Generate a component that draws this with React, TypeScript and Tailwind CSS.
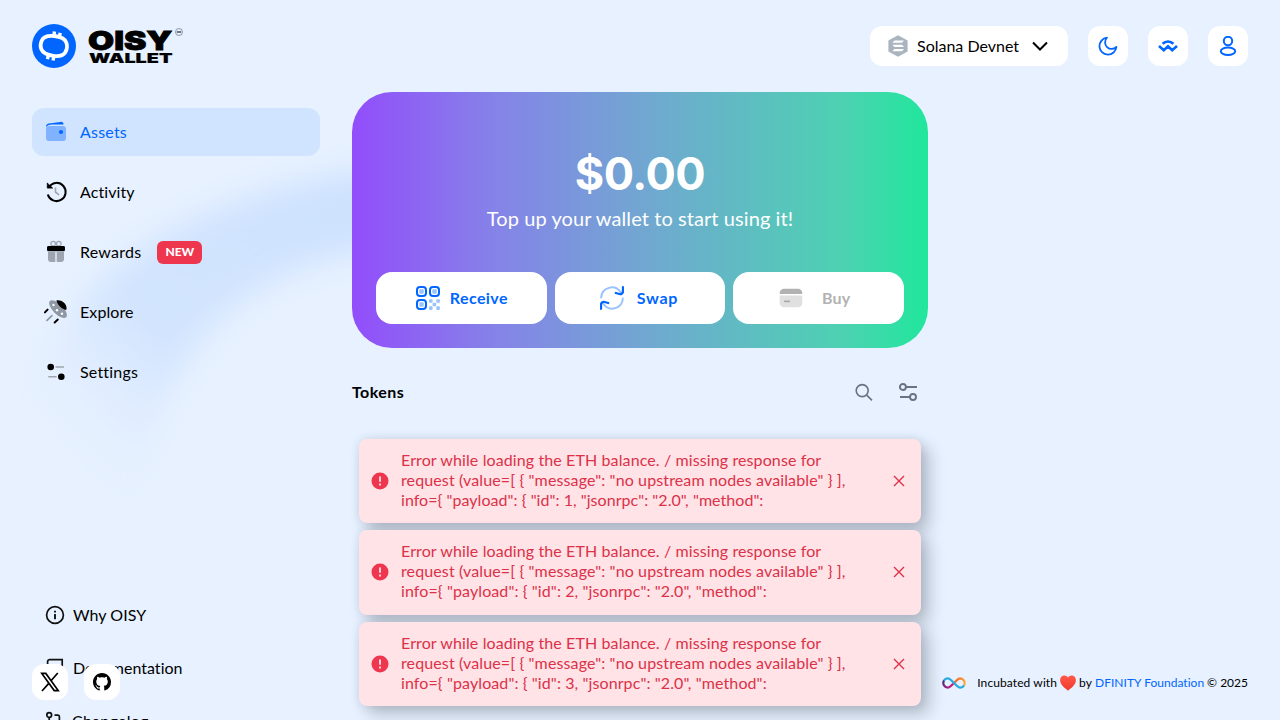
import React from "react";

function Logo() {
  return (
    <svg width="152" height="44" viewBox="0 0 152 44" fill="none">
      <circle cx="22" cy="22" r="22" fill="#0066ff" />
      <path
        d="M9.8 16.5C11.5 12.4 17 11.4 22.5 12C28.5 12.6 33.2 14.9 34.5 19C35.4 22 34.9 25.8 33.1 28.6C30.7 32.100 26.5 32.500 21.3 31.800C15.5 31 10.8 28.8 9.2 25C8.2 22.500 8.500 19.400 9.8 16.5Z"
        stroke="#fff"
        strokeWidth="3.8"
      />
      <path d="M21.700 12.5L22.500 7.600M27.300 13.3L28.200 8.800M16.400 30.8L15.500 35.200M22 31.500L21.100 36.500" stroke="#fff" strokeWidth="3.400" />
      <text x="56" y="26.3" textLength="84.5" lengthAdjust="spacingAndGlyphs" fill="#000" stroke="#000" strokeWidth="0.8" fontFamily="Inter, sans-serif" fontWeight="900" fontSize="26">
        OISY
      </text>
      <text x="57" y="39.4" textLength="83.500" lengthAdjust="spacingAndGlyphs" fill="#000" stroke="#000" strokeWidth="0.15" fontFamily="Inter, sans-serif" fontWeight="900" fontSize="13">
        WALLET
      </text>
      <circle cx="147" cy="8" r="3.5" stroke="#555c66" strokeWidth="0.6" />
      <path d="M144.8 8H149.2" stroke="#555c66" strokeWidth="1.6" />
    </svg>
  );
}

const WalletIcon = () => (
  <svg width="24" height="24" viewBox="0 0 24 24">
    <rect x="2" y="6" width="20" height="15" rx="3" fill="#80b2ff" />
    <path d="M2 7.2C2 4.6 3.2 3.8 5 3.5L16.5 1.9C18.5 1.7 19.4 2.6 19.6 4.4L8 4.6C5 4.8 3.2 5.4 2 7.2Z" fill="#0066ff" />
    <circle cx="17" cy="12" r="2.1" fill="#0066ff" />
  </svg>
);

const HistoryIcon = () => (
  <svg width="24" height="24" viewBox="0 0 24 24" fill="none" strokeWidth="2">
    <path d="M5.2 6.6A9.1 9.1 0 1 1 3.8 14.5" stroke="#000" />
    <path d="M3.3 2.9V8.1H8.6L6.6 6.2L5.2 5.2Z" fill="#000" stroke="#000" strokeWidth="0.8" />
    <path d="M11.5 7.5V12L15 14.8" stroke="#9ea5b0" strokeWidth="1.6" />
  </svg>
);

const GiftIcon = () => (
  <svg width="24" height="24" viewBox="0 0 24 24" fill="none">
    <circle cx="9.2" cy="3.7" r="2.3" stroke="#9ea5b0" strokeWidth="1.3" />
    <circle cx="14.8" cy="3.7" r="2.3" stroke="#9ea5b0" strokeWidth="1.3" />
    <path d="M4 12H11.3V22H7A3 3 0 0 1 4 19ZM12.7 12H20V19A3 3 0 0 1 17 22H12.7Z" fill="#9ea5b0" />
    <rect x="3" y="6" width="18" height="5.3" rx="1.4" fill="#000" />
  </svg>
);

const UfoIcon = () => (
  <svg width="24" height="24" viewBox="0 0 24 24" fill="none">
    <path d="M12.8 1.2C17.5-.2 22.8 4.2 21.5 10C18.5 9.5 13.2 5.6 12.8 1.2Z" fill="#000" />
    <ellipse cx="14" cy="9.1" rx="11.5" ry="5" transform="rotate(45 14 9.1)" fill="#8f98a4" />
    <path d="M12.4 .4C16.5 -1 24 3.500 22.300 9.800C18 9 13.800 5.500 12.400 .4Z" fill="#000" />
    <circle cx="9.5" cy="5" r="1.2" fill="#fff" />
    <circle cx="13" cy="10.3" r="1.2" fill="#fff" />
    <circle cx="18" cy="13.7" r="1.2" fill="#fff" />
    <path d="M3.6 9.6L.9 12.4M13.8 19.6L10.7 22.5" stroke="#000" strokeWidth="2" strokeLinecap="round" />
    <path d="M7.9 15.6L3 20.4" stroke="#8f98a4" strokeWidth="1.8" strokeLinecap="round" />
  </svg>
);

const SettingsIcon = () => (
  <svg width="24" height="24" viewBox="0 0 24 24" fill="none">
    <path d="M11.5 7H20M4.3 16.8H12.6" stroke="#9ea5b0" strokeWidth="1.5" />
    <circle cx="6.7" cy="7" r="3.3" fill="#000" />
    <circle cx="17.3" cy="16.8" r="3.3" fill="#000" />
  </svg>
);

const InfoIcon = () => (
  <svg width="20" height="20" viewBox="0 0 20 20" fill="none" stroke="#111" strokeWidth="1.7">
    <circle cx="10" cy="10" r="8.4" />
    <path d="M10 9V14.2M10 5.8V7.5" strokeWidth="1.9" />
  </svg>
);

const BookIcon = () => (
  <svg width="20" height="20" viewBox="0 0 20 20" fill="none" stroke="#111" strokeWidth="1.7">
    <path d="M2.6 17V3.4A2 2 0 0 1 4.6 1.6H17.2V15H4.6A2 2 0 0 0 4.6 19H17.2" />
  </svg>
);

const ChangelogIcon = () => (
  <svg width="20" height="20" viewBox="0 0 20 20" fill="none" stroke="#111" strokeWidth="1.7">
    <circle cx="4.2" cy="4" r="2.4" />
    <path d="M4.2 6.4V17M9.5 4.2H13A1.5 1.5 0 0 1 14.4 5.7V14" />
  </svg>
);

const SolanaIcon = () => (
  <svg width="20" height="22" viewBox="0 0 20 22">
    <path d="M10 .2L19.6 5.6V16.4L10 21.8L.4 16.4V5.6Z" fill="#a9b4bf" />
    <path d="M6.4 5.4H16L14 7.7H4.4ZM4.4 9.7H14L16 12H6.4ZM6.4 14H16L14 16.3H4.4Z" fill="#fff" />
  </svg>
);

const QrIcon = () => (
  <svg width="24" height="24" viewBox="0 0 24 24" fill="none">
    <g stroke="#0066ff" strokeWidth="2">
      <rect x="1" y="1" width="9" height="9" rx="3" />
      <rect x="14" y="1" width="9" height="9" rx="3" />
      <rect x="1" y="14" width="9" height="9" rx="3" />
    </g>
    <g fill="#99c2ff">
      <rect x="3.3" y="3.3" width="4.4" height="4.4" rx="1" />
      <rect x="16.3" y="3.3" width="4.4" height="4.4" rx="1" />
      <rect x="3.3" y="16.3" width="4.4" height="4.4" rx="1" />
      <rect x="13" y="13.2" width="3.6" height="3.6" rx=".8" />
      <rect x="20.3" y="13.2" width="3.6" height="3.6" rx=".8" />
      <rect x="16.6" y="16.7" width="3.6" height="3.6" rx=".8" />
      <rect x="13" y="20.3" width="3.6" height="3.6" rx=".8" />
      <rect x="20.3" y="20.3" width="3.6" height="3.6" rx=".8" />
    </g>
  </svg>
);

const SwapIcon = () => (
  <svg width="24" height="24" viewBox="0 0 24 24" fill="none" strokeWidth="2" strokeLinecap="round" strokeLinejoin="round">
    <path d="M1.2 11.5A10.6 10.6 0 0 1 20.5 6M22.8 12.5A10.6 10.6 0 0 1 3.5 18" stroke="#99c2ff" />
    <path d="M23 1.2V5.2A2.8 2.8 0 0 1 19.4 8L15.8 7M1 22.8V18.8A2.8 2.8 0 0 1 4.6 16L8.2 17" stroke="#0066ff" strokeWidth="2.3" />
  </svg>
);

const CardIcon = () => (
  <svg width="24" height="24" viewBox="0 0 24 24">
    <path d="M.7 8V7A4.3 4.3 0 0 1 5 2.7H19A4.3 4.3 0 0 1 23.3 7V8Z" fill="#b2b2b2" />
    <path d="M.7 9.5H23.3V17A4.3 4.3 0 0 1 19 21.3H5A4.3 4.3 0 0 1 .7 17Z" fill="#e0e0e0" />
    <path d="M5.7 15.3H10.3" stroke="#a8a8a8" strokeWidth="1.8" strokeLinecap="round" />
  </svg>
);

function IconButton({ children }: { children: React.ReactNode }) {
  return <button className="flex size-10 items-center justify-center rounded-xl bg-white text-[#0066ff]">{children}</button>;
}

const nav = [
  { label: "Assets", icon: <WalletIcon />, track: "tracking-[0.2px]", active: true },
  { label: "Activity", icon: <HistoryIcon />, track: "tracking-[0.1px]" },
  { label: "Rewards", icon: <GiftIcon />, track: "tracking-[0.23px]", badge: "NEW" },
  { label: "Explore", icon: <UfoIcon />, track: "tracking-[0.1px]" },
  { label: "Settings", icon: <SettingsIcon />, track: "tracking-[0.2px]" },
];

const lowerNav = [
  { label: "Why OISY", icon: <InfoIcon />, track: "tracking-[0.05px]" },
  { label: "Documentation", icon: <BookIcon />, track: "tracking-[0.02px]" },
  { label: "Changelog", icon: <ChangelogIcon />, track: "-ml-px tracking-[0.25px]" },
];

function Toast({ id, lastLine }: { id: number; lastLine: string }) {
  return (
    <div className="flex h-[84.5px] items-center rounded-lg bg-[#ffe3e6] pl-3 pr-4 text-[#dc3149] shadow-[8px_8px_16px_rgba(30,32,38,0.25),0_0_10px_rgba(60,80,110,0.12)]">
      <svg width="18" height="18" viewBox="0 0 18 18" className="shrink-0">
        <circle cx="9" cy="9" r="8.5" fill="#ef364f" />
        <path d="M9 4.5V9.7M9 11.6V13.4" stroke="#ffe3e6" strokeWidth="1.8" />
      </svg>
      <p className="ml-3 flex-1 whitespace-nowrap pb-[2px] text-base leading-5">
        <span className="block tracking-[0.11px]">Error while loading the ETH balance. / missing response for</span>
        <span className="block tracking-[0.12px]">{'request (value=[ { "message": "no upstream nodes available" } ],'}</span>
        <span className={lastLine}>{`info={ "payload": { "id": ${id}, "jsonrpc": "2.0", "method":`}</span>
      </p>
      <svg width="12" height="12" viewBox="0 0 12 12" stroke="currentColor" strokeWidth="1.4">
        <path d="M1 1L11 11M11 1L1 11" />
      </svg>
    </div>
  );
}

export default function App() {
  return (
    <div className="relative h-[720px] w-[1280px] overflow-hidden bg-[#e7f1ff] font-['Lato',sans-serif] text-base text-black">
      <svg className="absolute left-0 top-0" width="1280" height="720" viewBox="0 0 1280 720" fill="none">
        <defs>
          <filter id="soft" x="-20%" y="-20%" width="140%" height="140%">
            <feGaussianBlur stdDeviation="15" />
          </filter>
          <linearGradient id="arc" gradientUnits="userSpaceOnUse" x1="340" y1="200" x2="60" y2="470">
            <stop offset="0" stopColor="#cee2fe" />
            <stop offset="0.6" stopColor="#d3e5fe" />
            <stop offset="1" stopColor="#e7f1ff" stopOpacity="0" />
          </linearGradient>
        </defs>
        <path d="M10 500C20 300 150 190 420 163L420 245C290 250 160 310 140 500Z" fill="url(#arc)" filter="url(#soft)" />
      </svg>

      <div className="relative flex h-full flex-col">
        <header className="flex h-[92px] shrink-0 items-center justify-between px-8">
          <Logo />
          <div className="flex items-center gap-5">
            <button className="flex h-10 w-[198px] items-center rounded-xl bg-white pl-[18px]">
              <SolanaIcon />
              <span className="ml-[9px] w-[102px] whitespace-nowrap">Solana Devnet</span>
              <svg className="ml-[13px]" width="16" height="10" viewBox="0 0 16 10" fill="none" stroke="#000" strokeWidth="2">
                <path d="M1 1.5L8 8.5L15 1.5" />
              </svg>
            </button>
            <IconButton>
              <svg width="20" height="20" viewBox="0 0 20 20" fill="none" stroke="currentColor" strokeWidth="1.8" strokeLinejoin="round">
                <path d="M9 1.7A8.5 8.5 0 1 0 18.4 11A6.2 6.2 0 0 1 9 1.7Z" />
              </svg>
            </IconButton>
            <IconButton>
              <svg width="20" height="12" viewBox="0 0 20 12" fill="none" stroke="currentColor" strokeWidth="2.6">
                <path d="M4.6 3.8C7.8.8 12.2.8 15.4 3.8M1 6L5.8 10.2L10 6.2L14.2 10.2L19 6" />
              </svg>
            </IconButton>
            <IconButton>
              <svg width="18" height="20" viewBox="0 0 18 20" fill="none" stroke="currentColor" strokeWidth="2">
                <circle cx="9" cy="5" r="4.2" />
                <ellipse cx="9" cy="15.3" rx="7.2" ry="3.7" />
              </svg>
            </IconButton>
          </div>
        </header>

        <div className="flex min-h-0 flex-1 gap-8 px-8">
          <aside className="flex w-72 flex-col pt-4">
            <nav className="flex flex-col gap-3">
              {nav.map((n) => (
                <a
                  key={n.label}
                  className={n.active ? "flex h-12 items-center rounded-xl bg-[#d0e3ff] pl-3 text-[#0066ff]" : "flex h-12 items-center rounded-xl pl-3"}
                >
                  {n.icon}
                  <span className={`ml-3 ${n.track}`}>{n.label}</span>
                  {n.badge && (
                    <span className="ml-4 flex h-[23px] w-[45px] items-center justify-center rounded-md bg-[#ef364f] text-xs font-black text-white">{n.badge}</span>
                  )}
                </a>
              ))}
            </nav>
            <nav className="mt-[199px] flex flex-col gap-[13px] pl-[13px]">
              {lowerNav.map((n) => (
                <a key={n.label} className="flex h-10 shrink-0 items-center gap-2">
                  {n.icon}
                  <span className={n.track}>{n.label}</span>
                </a>
              ))}
            </nav>
          </aside>

          <main className="flex w-[576px] flex-col">
            <section className="flex h-64 flex-col items-center rounded-[40px] bg-[linear-gradient(90deg,#924dfb_0%,#8583e8_25%,#72a6d2_50%,#4dd1b2_85%,#20e79c_100%)] px-6 pt-[52px] text-white">
              <div className="font-['Inter',sans-serif] text-[45px] font-bold leading-[59px] tracking-[-0.5px]">$0.00</div>
              <div className="mt-px whitespace-nowrap text-xl leading-7 tracking-[0.08px]">Top up your wallet to start using it!</div>
              <div className="mt-10 grid w-full grid-cols-3 gap-2 font-bold text-[#0066ff]">
                <button className="flex h-[52px] items-center justify-center gap-[10px] rounded-2xl bg-white pl-px">
                  <QrIcon />
                  <span className="tracking-[0.4px]">Receive</span>
                </button>
                <button className="flex h-[52px] items-center justify-center gap-[13px] rounded-2xl bg-white pr-[2px]">
                  <SwapIcon />
                  <span className="tracking-[0.7px]">Swap</span>
                </button>
                <button className="flex h-[52px] items-center justify-center gap-[19px] rounded-2xl bg-white pr-2 text-[#b2b2b2]">
                  <CardIcon />
                  <span className="tracking-[0.1px]">Buy</span>
                </button>
              </div>
            </section>
            <div className="mt-6 flex h-10 items-center justify-between pr-[11px]">
              <h2 className="font-bold tracking-[0.45px]">Tokens</h2>
              <div className="flex items-center gap-[26px] text-[#6a7380]">
                <svg width="18" height="18" viewBox="0 0 18 18" fill="none" stroke="currentColor" strokeWidth="1.6">
                  <circle cx="7.2" cy="7.6" r="6" />
                  <path d="M11.5 11.9L17 17.4" />
                </svg>
                <svg width="18" height="18" viewBox="0 0 18 18" fill="none" stroke="currentColor" strokeWidth="1.9">
                  <circle cx="3.9" cy="4" r="3" />
                  <circle cx="14" cy="14" r="3" />
                  <path d="M7 4H18M1 14H11" />
                </svg>
              </div>
            </div>
          </main>
        </div>
      </div>

      <div className="absolute left-8 top-[664px] flex gap-4">
        <a className="flex size-9 items-center justify-center rounded-xl bg-white">
          <svg width="20" height="20" viewBox="0 0 20 20" fill="none" stroke="#000">
            <path d="M1.8 1.4H5.8L18.2 18.6H14.2Z" strokeWidth="1.7" />
            <path d="M17.8 1L11 8.8M8.6 11.6L2 19" strokeWidth="1.7" />
          </svg>
        </a>
        <a className="flex size-9 items-center justify-center rounded-xl bg-white">
          <svg width="18" height="18" viewBox="0 0 16 16">
            <path
              fillRule="evenodd"
              d="M8 0C3.58 0 0 3.58 0 8c0 3.54 2.29 6.53 5.47 7.59.4.07.55-.17.55-.38 0-.19-.01-.82-.01-1.49-2.01.37-2.53-.49-2.69-.94-.09-.23-.48-.94-.82-1.13-.28-.15-.68-.52-.01-.53.63-.01 1.08.58 1.23.82.72 1.21 1.87.87 2.33.66.07-.52.28-.87.51-1.07-1.78-.2-3.64-.89-3.64-3.95 0-.87.31-1.59.82-2.15-.08-.2-.36-1.02.08-2.12 0 0 .67-.21 2.2.82.64-.18 1.32-.27 2-.27s1.36.09 2 .27c1.53-1.04 2.2-.82 2.2-.82.44 1.1.16 1.92.08 2.12.51.56.82 1.27.82 2.15 0 3.07-1.87 3.75-3.65 3.95.29.25.54.73.54 1.48 0 1.07-.01 1.93-.01 2.2 0 .21.15.46.55.38A8.01 8.01 0 0 0 16 8c0-4.42-3.58-8-8-8Z"
            />
          </svg>
        </a>
      </div>

      <footer className="absolute right-8 top-[673px] flex h-5 items-center whitespace-nowrap text-xs">
        <svg width="24" height="12" viewBox="0 0 24 12" fill="none" strokeWidth="2.2" strokeLinecap="round">
          <defs>
            <linearGradient id="icw" x1="12" x2="24" y1="0" y2="4" gradientUnits="userSpaceOnUse">
              <stop stopColor="#f15a24" />
              <stop offset="1" stopColor="#fbb03b" />
            </linearGradient>
            <linearGradient id="icp" x1="12" x2="0" y1="12" y2="6" gradientUnits="userSpaceOnUse">
              <stop stopColor="#ed1e79" />
              <stop offset="1" stopColor="#522785" />
            </linearGradient>
          </defs>
          <path d="M12 6C9 9 8 10.6 5.8 10.6A4.6 4.6 0 0 1 1.8 4" stroke="url(#icp)" />
          <path d="M12 6C15 3 16 1.4 18.2 1.4A4.6 4.6 0 0 1 22.2 8" stroke="url(#icw)" />
          <path d="M2.6 2.8C3.5 1.7 4.5 1.4 5.8 1.4C9.5 1.4 14.5 10.6 18.2 10.6C19.5 10.6 20.5 10.3 21.4 9.2" stroke="#29abe2" />
        </svg>
        <span className="ml-[11px] tracking-[0.1px]">Incubated with</span>
        <svg className="mx-[3px]" width="16" height="16" viewBox="0 0 16 16">
          <defs>
            <linearGradient id="heart" x1="0" x2="0" y1="0" y2="1">
              <stop stopColor="#ff5a4a" />
              <stop offset="1" stopColor="#f0392b" />
            </linearGradient>
          </defs>
          <path d="M8 15.7C5.5 13.2.1 10.2.1 5.2C.1 2.4 2 .5 4.3.5C6 .5 7.3 1.4 8 2.6C8.7 1.4 10 .5 11.7.5C14 .5 15.9 2.4 15.9 5.2C15.9 10.2 10.5 13.2 8 15.7Z" fill="url(#heart)" />
        </svg>
        <span className="tracking-[0.1px]">by</span>
        <span className="ml-[3px] tracking-[0.02px] text-[#0066ff]">DFINITY Foundation</span>
        <span className="ml-[3px]">© 2025</span>
      </footer>

      <div className="absolute left-[359px] top-[438.5px] flex w-[562px] flex-col gap-[7px]">
        <Toast id={1} lastLine="block tracking-[0.04px]" />
        <Toast id={2} lastLine="block tracking-[0.1px]" />
        <Toast id={3} lastLine="block tracking-[0.1px]" />
      </div>
    </div>
  );
}
